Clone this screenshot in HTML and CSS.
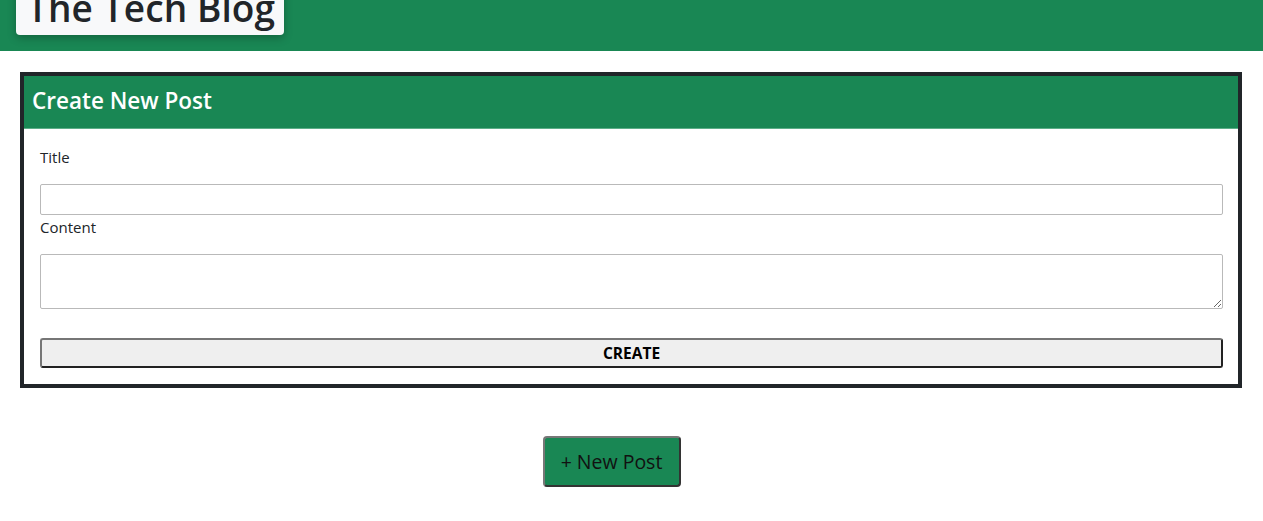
FILE: index.html
```html
<!DOCTYPE html>
<html lang="en">
<head>
<meta charset="utf-8">
<title>The Tech Blog</title>
<link rel="stylesheet" href="styles.css">
</head>
<body>
<header class="site-header">
  <h1 class="brand">The Tech Blog</h1>
</header>
<main class="container">
  <section class="card">
    <div class="card-header">
      <h2 class="card-title">Create New Post</h2>
    </div>
    <form class="card-body">
      <label class="field-label" for="title">Title</label>
      <input class="field-input" id="title" type="text">
      <label class="field-label label-content" for="content">Content</label>
      <textarea class="field-textarea" id="content"></textarea>
      <button class="create-btn" type="button">CREATE</button>
    </form>
  </section>
  <div class="actions">
    <button class="new-post-btn" type="button">+ New Post</button>
  </div>
</main>
</body>
</html>
```
FILE: styles.css
```css
* { box-sizing: border-box; }
html, body { margin: 0; padding: 0; }
body {
  font-family: "Open Sans", "Noto Sans", sans-serif;
  color: #212529;
  background: #fff;
}
.site-header {
  background: #198754;
  height: 51px;
  padding: 0 16px;
  display: flex;
  align-items: flex-start;
}
.brand {
  margin: -17px 0 0 0;
  background: #f8f9fa;
  border-radius: 4px;
  box-shadow: 0 3px 8px rgba(0,0,0,0.25);
  padding: 0 0 0 11px;
  font-size: 37px;
  font-weight: 600;
  line-height: 50px;
  height: 52px;
  width: 268px;
  white-space: nowrap;
  overflow: hidden;
  letter-spacing: 0.1px;
}
.container {
  padding: 21px 21px 0 20px;
}
.card {
  border: 4px solid #212529;
  background: #fff;
}
.card-header {
  background: #198754;
  height: 53px;
  border-bottom: 1px solid #5cae88;
  padding: 0 8px 4px;
  display: flex;
  align-items: center;
}
.card-title {
  margin: 0;
  color: #fff;
  font-size: 22.5px;
  font-weight: 600;
  letter-spacing: 0;
}
.card-body {
  padding: 17px 15px 16px 16px;
  display: flex;
  flex-direction: column;
}
.field-label {
  font-size: 15px;
  line-height: 22px;
  color: #212529;
}
.field-input {
  margin-top: 16px;
  height: 31px;
  border: 1px solid #b9b9b9;
  border-radius: 2px;
  font: inherit;
}
.label-content { margin-top: 1px; }
.field-textarea {
  margin-top: 16px;
  height: 55px;
  border: 1px solid #b9b9b9;
  border-radius: 2px;
  font: inherit;
  resize: vertical;
}
.create-btn {
  margin-top: 29px;
  height: 30px;
  background: #efefef;
  border: 2px solid #222;
  border-top-color: #767676;
  border-left-color: #767676;
  border-radius: 3px;
  font-family: inherit;
  font-weight: 700;
  font-size: 15.5px;
  color: #000;
  padding: 0;
}
.actions {
  display: flex;
  justify-content: center;
  padding: 48px 39px 0 0;
}
.new-post-btn {
  width: 138px;
  height: 51px;
  background: #198754;
  border: 2px solid #333;
  border-top-color: #777;
  border-left-color: #777;
  border-radius: 4px;
  font-family: inherit;
  font-size: 19.5px;
  color: #111;
  padding: 0;
}
```
